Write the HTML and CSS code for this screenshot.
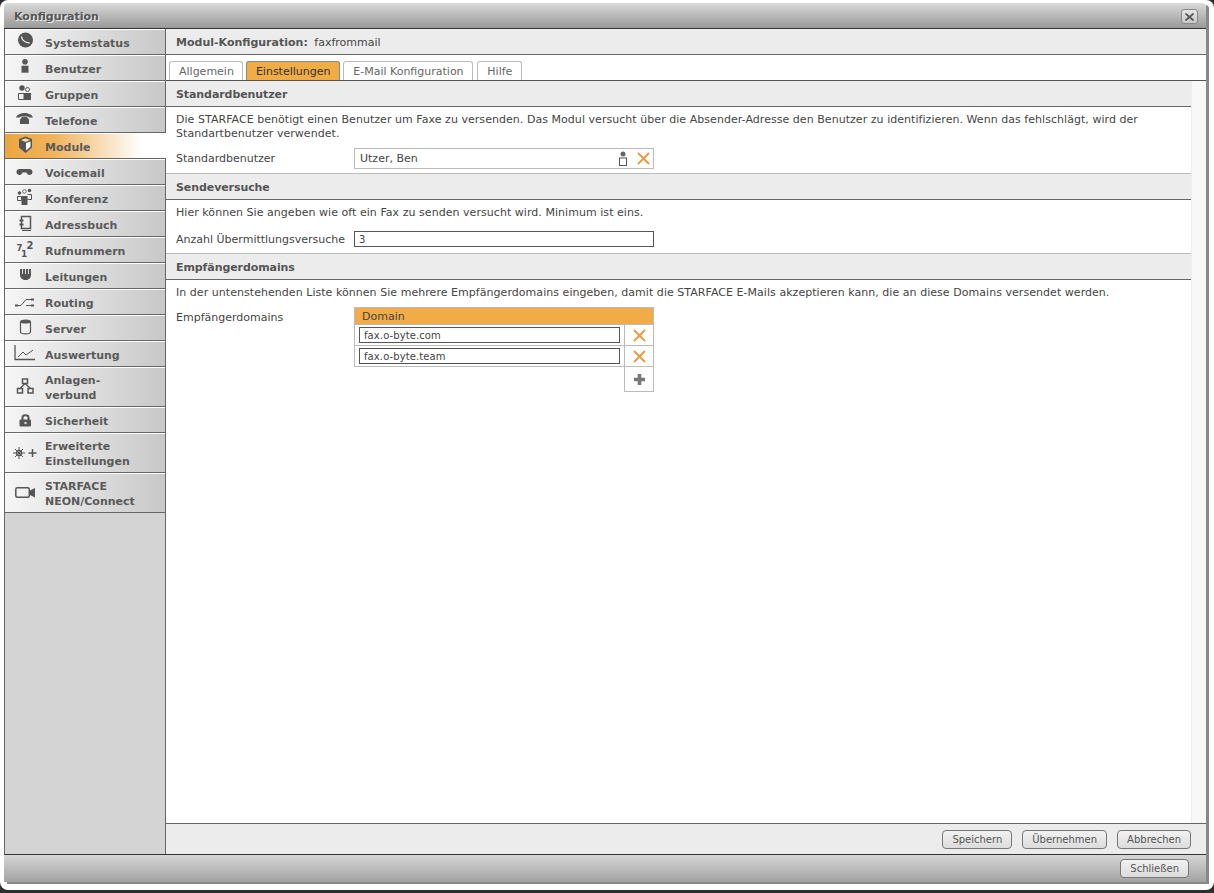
FILE: index.html
```html
<!DOCTYPE html>
<html lang="de">
<head>
  <meta charset="UTF-8" />
  <title>Konfiguration</title>
  <link rel="stylesheet" href="styles.css">
</head>
<body>
  <div class="dialog">
    <div class="window">
      <div class="titlebar">
        <span class="title">Konfiguration</span>
        <button class="close-btn">
          <svg width="11" height="8" viewBox="0 0 11 8"><path d="M1.500 0.500 L9.500 7.500 M9.500 0.500 L1.500 7.500" stroke="#555" stroke-width="1.700" fill="none"/></svg>
        </button>
      </div>

      <div class="main">
        <nav class="sidebar">
          <a class="nav-item"><span class="nav-icon"><svg width="20" height="20" viewBox="0 0 20 20"><circle cx="10.500" cy="9" r="7.500" fill="#555"/><path d="M6.500 5.500 Q7 11 14.500 12" stroke="#eee" stroke-width="1.400" fill="none"/></svg></span><span>Systemstatus</span></a>
          <a class="nav-item"><span class="nav-icon"><svg width="20" height="20" viewBox="0 0 20 20"><circle cx="10" cy="4.700" r="2.800" fill="#555"/><rect x="6.500" y="8.700" width="7" height="7" fill="#555"/></svg></span><span>Benutzer</span></a>
          <a class="nav-item"><span class="nav-icon"><svg width="20" height="20" viewBox="0 0 20 20"><circle cx="7" cy="5" r="2.700" fill="#555"/><circle cx="12.500" cy="6.500" r="2" fill="none" stroke="#555"/><path d="M3.500 10.500 H9 V16.500 H3.500 Z" fill="none" stroke="#555"/><rect x="9" y="10" width="7" height="7" fill="#555"/></svg></span><span>Gruppen</span></a>
          <a class="nav-item"><span class="nav-icon"><svg width="20" height="20" viewBox="0 0 20 20"><path d="M1 8.500 C3 2.500 16 2.500 18 8.500 L14 8.500 C13 6.500 6 6.500 5 8.500 Z" fill="#555"/><path d="M5 15 V10.500 L7.500 7.500 H11.500 L14 10.500 V15 Z" fill="#555"/></svg></span><span>Telefone</span></a>
          <a class="nav-item active"><span class="nav-icon"><svg width="20" height="20" viewBox="0 0 20 20"><path d="M10.500 1.500 L17 4 V12.500 L10.500 18 L4 12.500 V4 Z" fill="#555"/><path d="M6 5 L10.500 3.200 L15 5 L10.500 7 Z" fill="#f3dcae"/><path d="M11 8 L15.500 6.500 V11.800 L11 15.500 Z" fill="#fff"/></svg></span><span>Module</span></a>
          <a class="nav-item"><span class="nav-icon"><svg width="20" height="20" viewBox="0 0 20 20"><path d="M1.500 11 C1.500 8 4 8 6 8 H13 C15 8 17.500 8 17.500 11 C17.500 14.500 12 15 11.500 11.500 H7.500 C7 15 1.500 14.500 1.500 11 Z" fill="#555"/></svg></span><span>Voicemail</span></a>
          <a class="nav-item"><span class="nav-icon"><svg width="20" height="20" viewBox="0 0 20 20"><circle cx="4.500" cy="6" r="1.800" fill="#555"/><circle cx="9.500" cy="4.500" r="1.800" fill="none" stroke="#555" stroke-width="0.800"/><circle cx="14.500" cy="3.500" r="1.800" fill="#555"/><path d="M2.500 9.500 H6.500 V13.500 H2.500 Z" fill="none" stroke="#555"/><rect x="6.500" y="9" width="6" height="9" fill="#555"/><path d="M12.500 7.500 H16.500 V12.500 H12.500" fill="none" stroke="#555"/></svg></span><span>Konferenz</span></a>
          <a class="nav-item"><span class="nav-icon"><svg width="20" height="20" viewBox="0 0 20 20"><path d="M6.500 3.500 H15.500 V15.500 H6.500 Z" fill="none" stroke="#555" stroke-width="1.500"/><path d="M7 17.500 H16" stroke="#555"/><path d="M4.500 7.500 H8.500 M4.500 11.500 H8.500" stroke="#555" stroke-width="2"/></svg></span><span>Adressbuch</span></a>
          <a class="nav-item"><span class="nav-icon"><svg class="num-icon" width="20" height="20" viewBox="0 0 20 20"><text x="1.500" y="12" font-size="8.500">7<tspan x="6" y="17.500" font-size="9">1</tspan><tspan x="11.500" y="10" font-size="10">2</tspan></text></svg></span><span>Rufnummern</span></a>
          <a class="nav-item"><span class="nav-icon"><svg width="20" height="20" viewBox="0 0 20 20"><path d="M5 4 H16 V10 C16 13 13.500 15 10.500 15 C7.500 15 5 13 5 10 Z" fill="#555"/><path d="M7.500 4 V9 M10.500 4 V9 M13.500 4 V9" stroke="#ddd"/></svg></span><span>Leitungen</span></a>
          <a class="nav-item"><span class="nav-icon"><svg width="20" height="20" viewBox="0 0 20 20"><path d="M1 14.500 H6 L11 8.500 H18 M11 14.500 H18" stroke="#555" fill="none"/><rect x="0" y="13.500" width="3" height="2" fill="#555"/><rect x="16" y="7.500" width="3" height="2" fill="#555"/><rect x="16" y="13.500" width="3" height="2" fill="#555"/></svg></span><span>Routing</span></a>
          <a class="nav-item"><span class="nav-icon"><svg width="20" height="20" viewBox="0 0 20 20"><path d="M5.500 5 C5.500 2.500 15.500 2.500 15.500 5 V15 C15.500 17.500 5.500 17.500 5.500 15 Z" fill="none" stroke="#555" stroke-width="1.200"/><path d="M5.500 5 C5.500 2.500 15.500 2.500 15.500 5 C15.500 7 5.500 7 5.500 5 Z" fill="#555"/></svg></span><span>Server</span></a>
          <a class="nav-item"><span class="nav-icon wide"><svg width="22" height="20" viewBox="0 0 22 20"><path d="M1 2 V16.500 H21" stroke="#555" stroke-width="1.300" fill="none"/><path d="M4 14 L9 9 L12 12 L19 7" stroke="#555" fill="none"/></svg></span><span>Auswertung</span></a>
          <a class="nav-item tall"><span class="nav-icon"><svg width="20" height="20" viewBox="0 0 20 20"><rect x="7.500" y="3" width="5" height="4.500" fill="none" stroke="#555" stroke-width="1.500"/><rect x="2.500" y="12.500" width="5" height="4.500" fill="none" stroke="#555" stroke-width="1.500"/><rect x="13" y="12.500" width="5" height="4.500" fill="none" stroke="#555" stroke-width="1.500"/><path d="M10 7.500 L5 12.500 M10 7.500 L15.500 12.500" stroke="#555" stroke-width="1.300"/></svg></span><span>Anlagen-<br>verbund</span></a>
          <a class="nav-item"><span class="nav-icon"><svg width="20" height="20" viewBox="0 0 20 20"><path d="M7.500 11 V8.500 C7.500 5.500 13.500 5.500 13.500 8.500 V11" fill="none" stroke="#555" stroke-width="2"/><rect x="4.500" y="10.500" width="11.500" height="7" rx="1" fill="#555"/><circle cx="10.500" cy="14" r="1.200" fill="#ddd"/></svg></span><span>Sicherheit</span></a>
          <a class="nav-item tall"><span class="nav-icon double"><svg width="24" height="14" viewBox="0 0 24 14"><circle cx="6" cy="7" r="2.600" fill="none" stroke="#555" stroke-width="1.200"/><path d="M6 1 V13 M0 7 H12 M2 3 L10 11 M10 3 L2 11" stroke="#555"/><path d="M19.500 3 V11 M15.500 7 H23.500" stroke="#555" stroke-width="1.500"/></svg></span><span>Erweiterte<br>Einstellungen</span></a>
          <a class="nav-item tall"><span class="nav-icon wide"><svg width="22" height="20" viewBox="0 0 22 20"><rect x="1.800" y="5.800" width="13.500" height="9.500" rx="1.500" fill="none" stroke="#555" stroke-width="1.500"/><path d="M15 9 L21 6 V15.500 L15 12.500 Z" fill="#555"/></svg></span><span>STARFACE<br>NEON/Connect</span></a>
        </nav>

        <div class="content">
          <div class="module-head"><b>Modul-Konfiguration:</b> faxfrommail</div>
          <div class="tabs">
            <a class="tab">Allgemein</a>
            <a class="tab selected">Einstellungen</a>
            <a class="tab">E-Mail Konfiguration</a>
            <a class="tab">Hilfe</a>
          </div>

          <div class="scroll-area">
            <div class="panel">
              <h3 class="section-head first">Standardbenutzer</h3>
              <div class="section-body body-user">
                <p class="desc">Die STARFACE benötigt einen Benutzer um Faxe zu versenden. Das Modul versucht über die Absender-Adresse den Benutzer zu identifizieren. Wenn das fehlschlägt, wird der Standartbenutzer verwendet.</p>
                <div class="field-row">
                  <label class="field-label">Standardbenutzer</label>
                  <div class="user-picker">
                    <span class="user-name">Utzer, Ben</span>
                    <svg class="user-icon" width="10" height="15" viewBox="0 0 10 15"><circle cx="5" cy="3" r="2.500" fill="#666"/><rect x="1.500" y="7" width="7" height="7.500" fill="#fff" stroke="#555"/></svg>
                    <svg width="13" height="13" viewBox="0 0 13 13"><path d="M1 1 L12 12 M12 1 L1 12" stroke="#ed9a3f" stroke-width="1.900" fill="none"/></svg>
                  </div>
                </div>
              </div>

              <h3 class="section-head">Sendeversuche</h3>
              <div class="section-body body-retries">
                <p class="desc">Hier können Sie angeben wie oft ein Fax zu senden versucht wird. Minimum ist eins.</p>
                <div class="field-row">
                  <label class="field-label">Anzahl Übermittlungsversuche</label>
                  <input class="text-input wide-input" type="text" value="3">
                </div>
              </div>

              <h3 class="section-head">Empfängerdomains</h3>
              <div class="section-body body-domains">
                <p class="desc">In der untenstehenden Liste können Sie mehrere Empfängerdomains eingeben, damit die STARFACE E-Mails akzeptieren kann, die an diese Domains versendet werden.</p>
                <div class="field-row top">
                  <label class="field-label">Empfängerdomains</label>
                  <table class="domain-table">
                    <colgroup><col><col class="col-action"></colgroup>
                    <thead><tr><th colspan="2">Domain</th></tr></thead>
                    <tbody>
                      <tr>
                        <td class="cell-input"><input class="text-input" type="text" value="fax.o-byte.com"></td>
                        <td class="cell-action"><svg width="13" height="13" viewBox="0 0 13 13"><path d="M1 1 L12 12 M12 1 L1 12" stroke="#ed9a3f" stroke-width="1.900" fill="none"/></svg></td>
                      </tr>
                      <tr>
                        <td class="cell-input"><input class="text-input" type="text" value="fax.o-byte.team"></td>
                        <td class="cell-action"><svg width="13" height="13" viewBox="0 0 13 13"><path d="M1 1 L12 12 M12 1 L1 12" stroke="#ed9a3f" stroke-width="1.900" fill="none"/></svg></td>
                      </tr>
                      <tr>
                        <td class="cell-empty"></td>
                        <td class="cell-action add"><svg width="13" height="13" viewBox="0 0 13 13"><path d="M6.500 1 V12 M1 6.500 H12" stroke="#777" stroke-width="3.600" fill="none"/></svg></td>
                      </tr>
                    </tbody>
                  </table>
                </div>
              </div>
            </div>
            <div class="scroll-track"></div>
          </div>

          <div class="action-bar">
            <button class="btn">Speichern</button>
            <button class="btn">Übernehmen</button>
            <button class="btn">Abbrechen</button>
          </div>
        </div>
      </div>

      <div class="bottombar">
        <button class="btn">Schließen</button>
      </div>
    </div>
  </div>
</body>
</html>
```

FILE: styles.css
```css
html, body {
  height: 100%;
}

body {
  margin: 0;
  background-color: #2e2e2e;
  font-family: "DejaVu Sans", Verdana, sans-serif;
  font-size: 11px;
  color: #444;
  overflow: hidden;
}

.dialog {
  box-sizing: border-box;
  height: 890px;
  padding: 3px 4px 6px 4px;
  background: #fff;
  border-radius: 8px;
}

.window {
  display: flex;
  flex-direction: column;
  height: 879px;
  width: 1202px;
  border-radius: 4px 4px 0 0;
  box-shadow: 3px 2px 0 #888;
  overflow: hidden;
}

.titlebar {
  display: flex;
  align-items: center;
  justify-content: space-between;
  box-sizing: border-box;
  height: 26px;
  padding: 2px 8px 0 10px;
  background: linear-gradient(#dadada, #999);
  border-bottom: 1px solid #333;
}

.title {
  font-weight: bold;
  color: #555;
  text-shadow: 1px 1px 0 #eee;
}

.close-btn {
  display: flex;
  align-items: center;
  justify-content: center;
  width: 17px;
  height: 15px;
  padding: 0;
  background: linear-gradient(#e4e4e4, #c8c8c8);
  border: 1px solid #888;
  border-radius: 3px;
}

.main {
  display: flex;
  flex: 1;
  min-height: 0;
  border-left: 1px solid #666;
  border-bottom: 1px solid #333;
}

.sidebar {
  box-sizing: border-box;
  width: 161px;
  background: #d4d4d4;
  border-right: 1px solid #666;
}

.nav-item {
  display: flex;
  align-items: center;
  box-sizing: border-box;
  height: 26px;
  padding: 2px 0 0 40px;
  position: relative;
  background: linear-gradient(to right, #f6f6f6, #c8c8c8);
  border-top: 1px solid #fff;
  border-bottom: 1px solid #666;
  font-weight: bold;
  line-height: 15px;
  color: #5a5a5a;
}

.nav-item.tall {
  height: 40px;
}

.nav-item.active {
  background: linear-gradient(to right, #eba63f, #f0b35c 30%, #fff 85%);
  margin-right: -1px;
}

.nav-icon {
  position: absolute;
  left: 10px;
  top: 1px;
  width: 20px;
  height: 20px;
}

.nav-item.tall .nav-icon {
  top: 8px;
}

.nav-icon.wide {
  left: 9px;
}

.nav-item.tall .nav-icon.double {
  left: 8px;
  top: 12px;
}

.num-icon text {
  font-family: "DejaVu Sans", sans-serif;
  font-weight: bold;
  fill: #555;
}

.content {
  display: flex;
  flex: 1;
  flex-direction: column;
  min-width: 0;
}

.module-head {
  box-sizing: border-box;
  height: 26px;
  padding: 7px 10px 0;
  background: #ececec;
  border-bottom: 1px solid #666;
}

.module-head b {
  margin-right: 3px;
  color: #555;
}

.tabs {
  display: flex;
  box-sizing: border-box;
  height: 26px;
  gap: 3px;
  padding: 6px 0 0 3px;
  background: #fff;
  border-bottom: 1px solid #555;
}

.tab {
  padding: 3px 8.75px 0 9px;
  background: #fff;
  border: 1px solid #bbb;
  border-bottom: none;
  border-radius: 3px 3px 0 0;
  color: #666;
}

.tab:first-child {
  padding-right: 8px;
}

.tab:last-child {
  margin-left: 1px;
}

.tab.selected {
  background: #f0ac45;
  border-color: #888;
  color: #333;
}

.scroll-area {
  display: flex;
  flex: 1;
  min-height: 0;
}

.panel {
  flex: 1;
  min-width: 0;
  background: #fff;
}

.scroll-track {
  width: 14px;
  background: #f8f8f8;
  border-left: 1px solid #eee;
}

.section-head {
  box-sizing: border-box;
  height: 27px;
  margin: 0;
  padding: 7px 10px 0;
  background: #ececec;
  border-top: 1px solid #bbb;
  border-bottom: 1px solid #666;
  font-size: 11px;
  letter-spacing: -0.08px;
  color: #555;
}

.section-head.first {
  height: 26px;
  border-top: none;
}

.section-body {
  box-sizing: border-box;
  padding: 6px 10px 0;
}

.body-user {
  height: 66px;
}

.body-retries {
  height: 53px;
}

.desc {
  margin: 0;
  line-height: 14px;
  letter-spacing: 0.045px;
  color: #444;
}

.field-row {
  display: flex;
  align-items: center;
}

.body-user .field-row {
  margin-top: 7px;
}

.body-retries .field-row {
  margin-top: 11px;
}

.body-domains .field-row {
  margin-top: 7px;
}

.field-row.top {
  align-items: flex-start;
}

.field-row.top .field-label {
  padding-top: 4px;
}

.field-label {
  width: 178px;
  color: #444;
}

.user-picker {
  display: flex;
  align-items: center;
  box-sizing: border-box;
  width: 300px;
  height: 21px;
  padding: 0 3px 0 5px;
  background: #fff;
  border: 1px solid #bbb;
}

.user-name {
  flex: 1;
}

.user-icon {
  margin-right: 9px;
}

.text-input {
  box-sizing: border-box;
  height: 16px;
  padding: 0 4px;
  background: #fff;
  border: 1px solid #555;
  border-radius: 0;
  font-family: inherit;
  font-size: 10px;
  letter-spacing: 0.1px;
  color: #444;
}

.wide-input {
  width: 300px;
}

.domain-table {
  width: 300px;
  table-layout: fixed;
  border-collapse: collapse;
}

.col-action {
  width: 29px;
}

.domain-table th {
  height: 16px;
  padding: 0 7px;
  background: #f2ac47;
  border: 1px solid #bbb;
  font-weight: normal;
  text-align: left;
  color: #444;
}

.domain-table td {
  height: 20px;
  padding: 0;
  border: 1px solid #bbb;
}

.domain-table .cell-input {
  padding-left: 4px;
}

.cell-input .text-input {
  display: block;
  width: 261px;
}

.domain-table .cell-empty {
  border: none;
  border-top: 1px solid #bbb;
}

.cell-action svg {
  display: block;
  margin: 0 auto;
}

.domain-table .cell-action.add {
  height: 24px;
}

.action-bar {
  display: flex;
  align-items: center;
  justify-content: flex-end;
  box-sizing: border-box;
  height: 31px;
  gap: 10px;
  padding-right: 15px;
  background: #ececec;
  border-top: 1px solid #666;
}

.btn {
  height: 19px;
  padding: 0 9px;
  background: linear-gradient(#f2f2f2, #dcdcdc);
  border: 1px solid #777;
  border-radius: 4px;
  font-family: inherit;
  font-size: 10px;
  color: #555;
}

.bottombar {
  display: flex;
  align-items: center;
  justify-content: flex-end;
  box-sizing: border-box;
  height: 27px;
  padding-right: 17px;
  background: linear-gradient(#d6d6d6, #a2a2a2);
}
```
